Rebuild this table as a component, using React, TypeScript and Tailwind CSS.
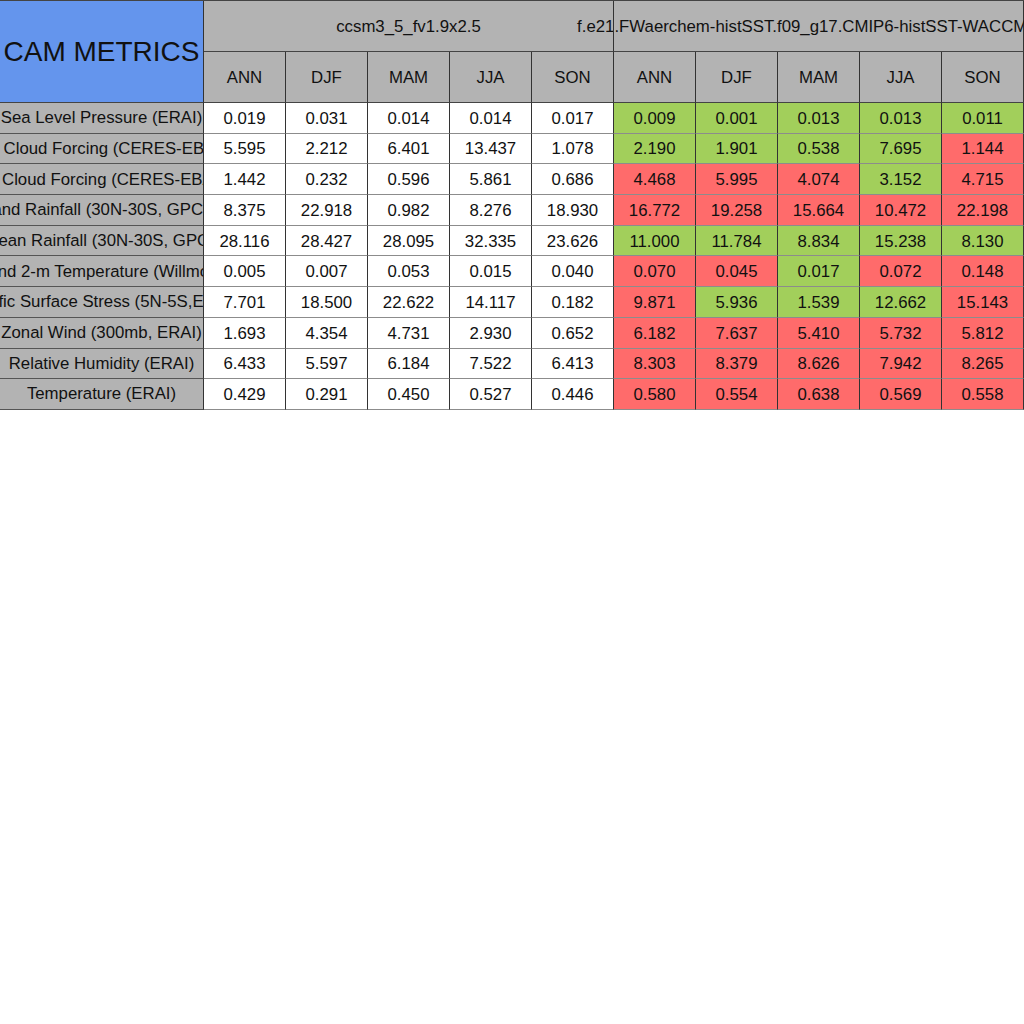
const seasons = ["ANN", "DJF", "MAM", "JJA", "SON"];

type Row = { label: string; base: string[]; test: string[]; flags: string };

// flags: g = better than baseline, r = worse
const rows: Row[] = [
  { label: "Sea Level Pressure (ERAI)", base: ["0.019", "0.031", "0.014", "0.014", "0.017"], test: ["0.009", "0.001", "0.013", "0.013", "0.011"], flags: "ggggg" },
  { label: "SW Cloud Forcing (CERES-EBAF)", base: ["5.595", "2.212", "6.401", "13.437", "1.078"], test: ["2.190", "1.901", "0.538", "7.695", "1.144"], flags: "ggggr" },
  { label: "LW Cloud Forcing (CERES-EBAF)", base: ["1.442", "0.232", "0.596", "5.861", "0.686"], test: ["4.468", "5.995", "4.074", "3.152", "4.715"], flags: "rrrgr" },
  { label: "Land Rainfall (30N-30S, GPCP)", base: ["8.375", "22.918", "0.982", "8.276", "18.930"], test: ["16.772", "19.258", "15.664", "10.472", "22.198"], flags: "rrrrr" },
  { label: "Ocean Rainfall (30N-30S, GPCP)", base: ["28.116", "28.427", "28.095", "32.335", "23.626"], test: ["11.000", "11.784", "8.834", "15.238", "8.130"], flags: "ggggg" },
  { label: "Land 2-m Temperature (Willmott)", base: ["0.005", "0.007", "0.053", "0.015", "0.040"], test: ["0.070", "0.045", "0.017", "0.072", "0.148"], flags: "rrgrr" },
  { label: "Pacific Surface Stress (5N-5S,ERAI)", base: ["7.701", "18.500", "22.622", "14.117", "0.182"], test: ["9.871", "5.936", "1.539", "12.662", "15.143"], flags: "rgggr" },
  { label: "Zonal Wind (300mb, ERAI)", base: ["1.693", "4.354", "4.731", "2.930", "0.652"], test: ["6.182", "7.637", "5.410", "5.732", "5.812"], flags: "rrrrr" },
  { label: "Relative Humidity (ERAI)", base: ["6.433", "5.597", "6.184", "7.522", "6.413"], test: ["8.303", "8.379", "8.626", "7.942", "8.265"], flags: "rrrrr" },
  { label: "Temperature (ERAI)", base: ["0.429", "0.291", "0.450", "0.527", "0.446"], test: ["0.580", "0.554", "0.638", "0.569", "0.558"], flags: "rrrrr" },
];

const cell = "flex items-center justify-center border-r border-b border-r-[#333] whitespace-nowrap";
const head = `${cell} border-b-[#444] bg-[#b3b3b3]`;
const data = `${cell} border-b-[#8c8c8c] text-[16.8px] pt-px`;

export default function App() {
  return (
    <div className="w-[1024px] h-[1024px] bg-white overflow-hidden text-[#111] font-['Liberation_Sans',Arial,sans-serif]">
      <div className="grid grid-cols-[204px_repeat(10,82px)] grid-rows-[51px_51px_repeat(10,30.7px)] border-t border-[#444]">
        <div className={`${cell} border-b-[#444] row-span-2 bg-[#6495ed] text-[28px] overflow-hidden`}>CAM METRICS</div>
        <div className={`${head} col-span-5 text-[16.8px]`}>
          <span className="pt-px">ccsm3_5_fv1.9x2.5</span>
        </div>
        <div className={`${head} col-span-5 text-[16.8px] relative`}>
          {/* long case name spills over the neighbouring header, like the original sheet */}
          <span className="absolute left-1/2 -translate-x-1/2 pt-px whitespace-nowrap">
            f.e21.FWaerchem-histSST.f09_g17.CMIP6-histSST-WACCM.001
          </span>
          <div className="absolute -left-px top-0 h-full w-px bg-[#333]" />
        </div>
        {[...seasons, ...seasons].map((s, i) => (
          <div key={"h" + i} className={`${head} text-[16.8px] pt-0.5`}>
            {s}
          </div>
        ))}
        {rows.map((r) => (
          <div key={r.label} className="contents">
            <div className={`${cell} border-b-[#555] bg-[#b3b3b3] text-[16.8px] overflow-hidden`}>
              <span>{r.label}</span>
            </div>
            {r.base.map((v, i) => (
              <div key={"b" + i} className={`${data} bg-white`}>
                {v}
              </div>
            ))}
            {r.test.map((v, i) => (
              <div key={"t" + i} className={`${data} ${r.flags[i] === "g" ? "bg-[#a2cf5b]" : "bg-[#ff6b6b]"}`}>
                {v}
              </div>
            ))}
          </div>
        ))}
      </div>
    </div>
  );
}
